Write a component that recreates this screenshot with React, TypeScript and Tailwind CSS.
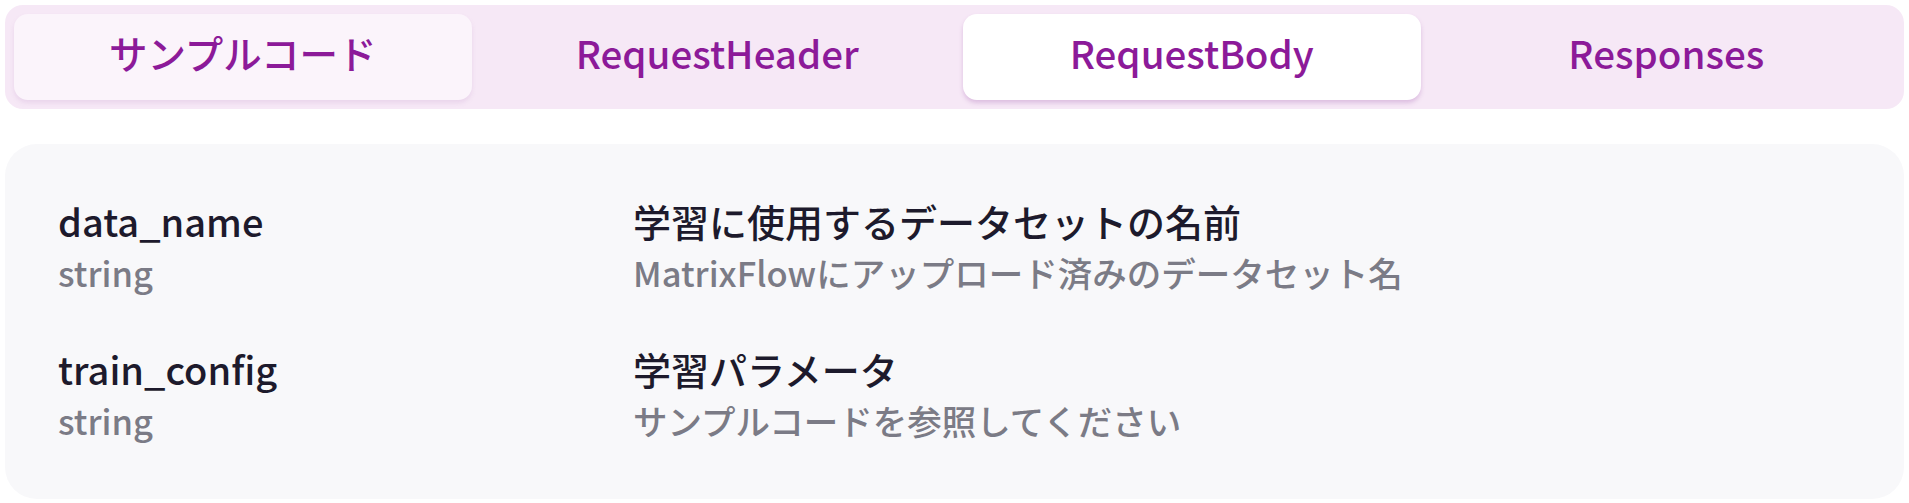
import React, { useState } from "react";

const tabs = ["サンプルコード", "RequestHeader", "RequestBody", "Responses"];

const params = [
  {
    name: "data_name",
    type: "string",
    title: "学習に使用するデータセットの名前",
    desc: "MatrixFlowにアップロード済みのデータセット名",
  },
  {
    name: "train_config",
    type: "string",
    title: "学習パラメータ",
    desc: "サンプルコードを参照してください",
  },
];

export default function App() {
  const [active, setActive] = useState(2);
  const hovered = 0;

  return (
    <div
      className="min-h-screen bg-white p-[5px]"
      style={{ fontFamily: '"Noto Sans CJK JP", "Noto Sans", sans-serif' }}
    >
      <div className="grid grid-cols-4 gap-[17px] rounded-[18px] bg-[#f6e8f6] p-[9px]">
        {tabs.map((tab, i) => (
          <button
            key={tab}
            onClick={() => setActive(i)}
            className={
              i === active
                ? "h-[86px] pb-[9px] rounded-[14px] bg-white text-[38.5px] font-medium text-[#8c1a99] shadow-[0_3px_4px_rgba(190,140,200,0.45)]"
                : i === hovered
                ? "h-[86px] pb-[9px] rounded-[14px] bg-[#fbf4fb] text-[38.5px] font-medium text-[#8c1a99] shadow-[0_3px_4px_rgba(220,190,225,0.45)]"
                : "h-[86px] pb-[9px] rounded-[14px] text-[38.5px] font-medium text-[#8c1a99]"
            }
          >
            {tab}
          </button>
        ))}
      </div>

      <div className="mt-[35px] flex flex-col gap-[49px] rounded-[32px] bg-[#f8f8fa] px-[53px] pt-[53px] pb-[55px]">
        {params.map((p) => (
          <div key={p.name} className="flex">
            <div className="w-[575px] shrink-0">
              <div className="text-[38px] leading-[48px] font-medium text-[#1d1a2c]">{p.name}</div>
              <div className="mt-[3px] text-[34.5px] leading-[48px] font-medium text-[#7b7b86]">{p.type}</div>
            </div>
            <div>
              <div className="text-[38px] leading-[48px] font-medium text-[#1d1a2c]">{p.title}</div>
              <div className="mt-[3px] text-[34.5px] leading-[48px] font-medium text-[#7b7b86]">{p.desc}</div>
            </div>
          </div>
        ))}
      </div>
    </div>
  );
}
